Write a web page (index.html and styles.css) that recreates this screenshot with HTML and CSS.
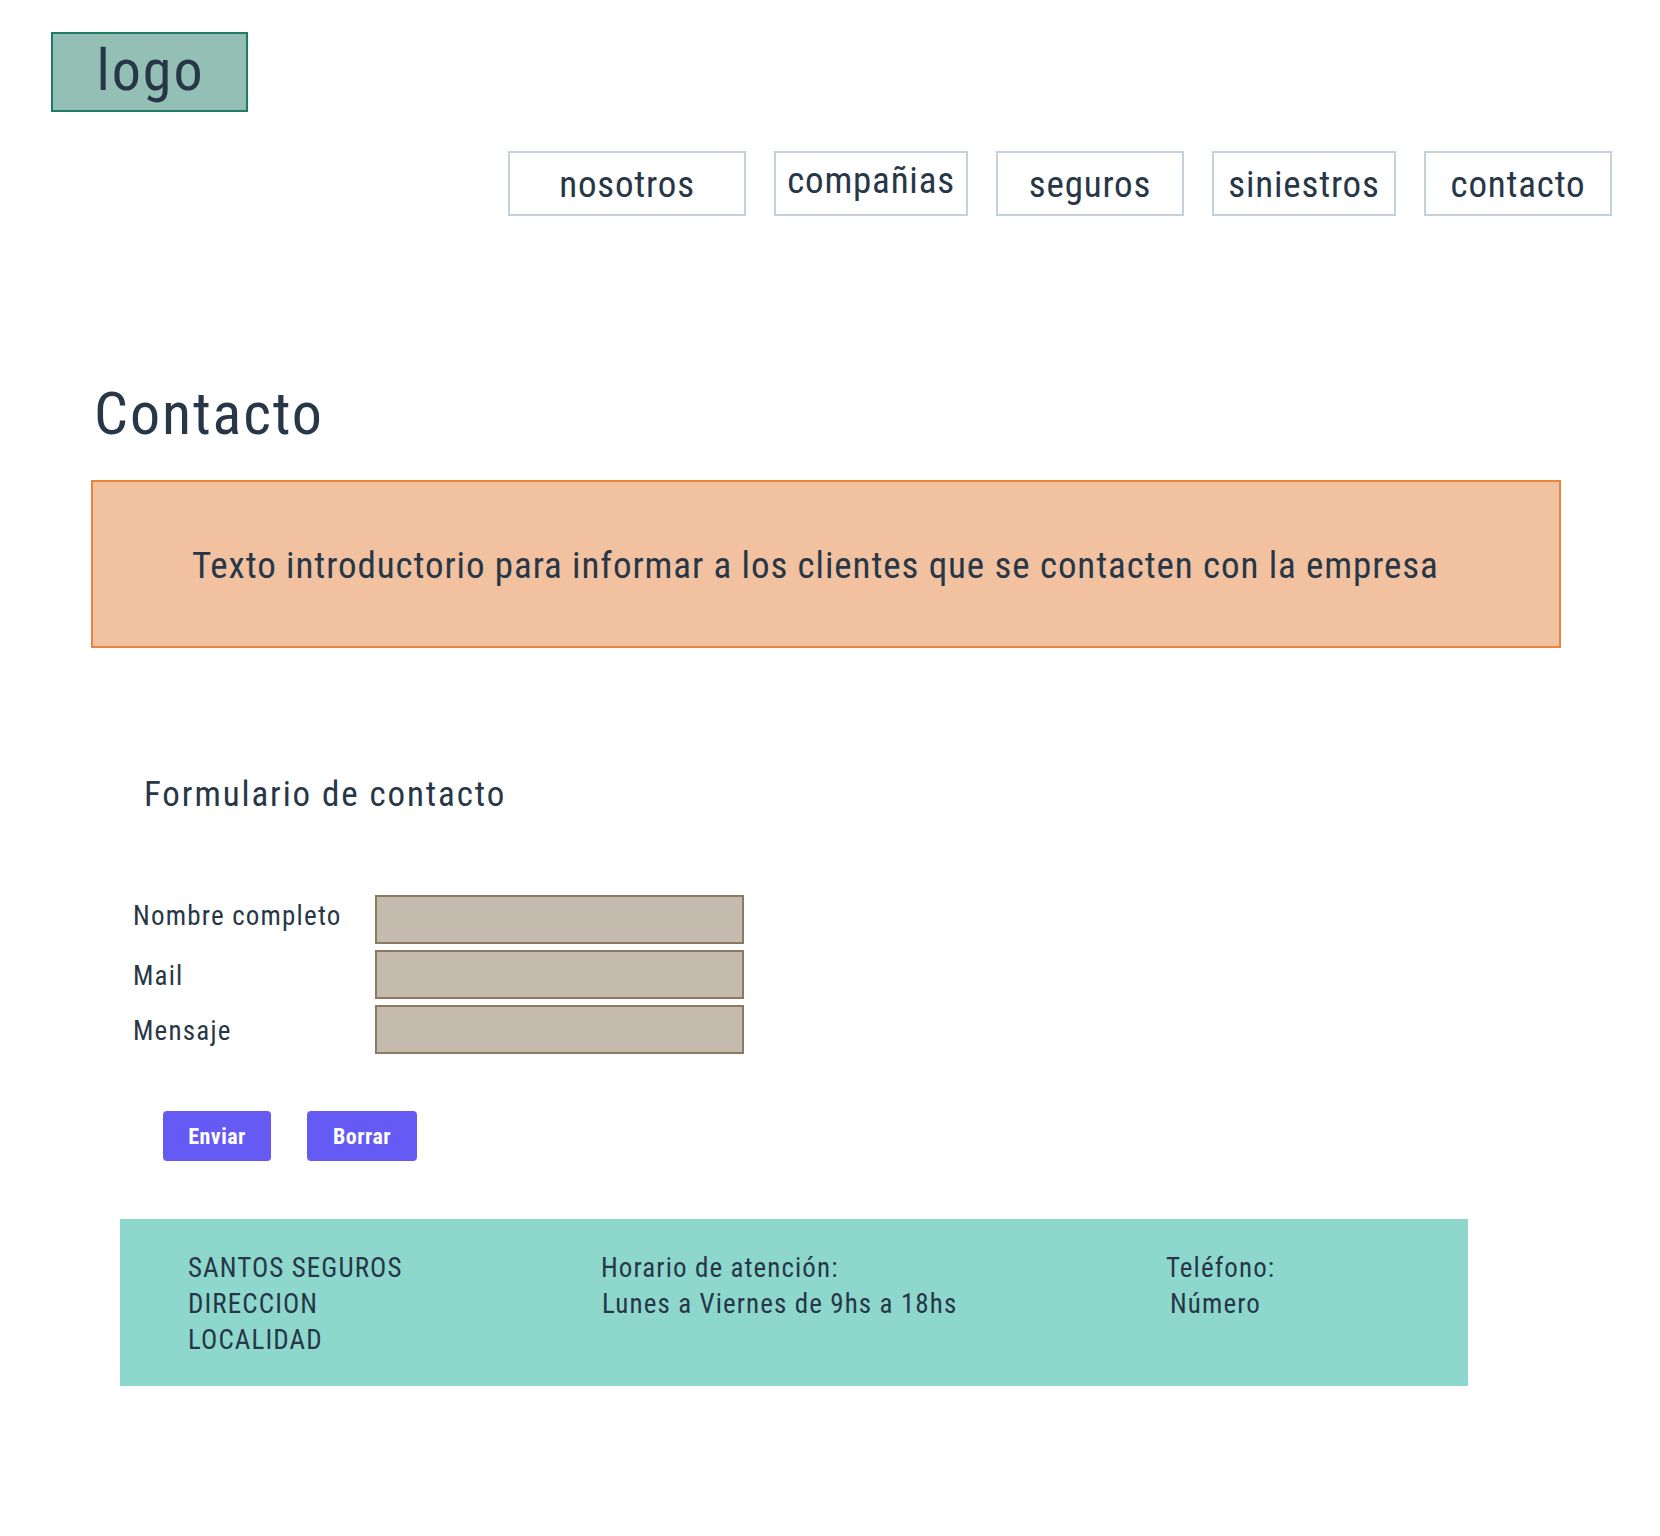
FILE: index.html
```
<!DOCTYPE html>
<html lang="es">
<head>
<meta charset="utf-8">
<title>Contacto</title>
<link rel="stylesheet" href="styles.css">
</head>
<body>
<header class="header">
  <div class="logo">logo</div>
  <nav class="nav">
    <a class="nav-item w-nosotros">nosotros</a>
    <a class="nav-item w-companias nav-item-up">compañias</a>
    <a class="nav-item w-seguros">seguros</a>
    <a class="nav-item w-siniestros">siniestros</a>
    <a class="nav-item w-contacto">contacto</a>
  </nav>
</header>
<main class="main">
  <h1 class="title">Contacto</h1>
  <div class="intro">
    <p class="intro-text">Texto introductorio para informar a los clientes que se contacten con la empresa</p>
  </div>
  <h2 class="form-title">Formulario de contacto</h2>
  <form class="form">
    <div class="field field-first">
      <label class="label">Nombre completo</label>
      <div class="input"></div>
    </div>
    <div class="field">
      <label class="label">Mail</label>
      <div class="input"></div>
    </div>
    <div class="field">
      <label class="label">Mensaje</label>
      <div class="input"></div>
    </div>
    <div class="buttons">
      <button type="button" class="btn btn-enviar">Enviar</button>
      <button type="button" class="btn btn-borrar">Borrar</button>
    </div>
  </form>
  <footer class="footer">
    <div class="fcol">
      <div>SANTOS SEGUROS</div>
      <div>DIRECCION</div>
      <div>LOCALIDAD</div>
    </div>
    <div class="fcol">
      <div>Horario de atención:</div>
      <div class="indent1">Lunes a Viernes de 9hs a 18hs</div>
    </div>
    <div class="fcol">
      <div>Teléfono:</div>
      <div class="indent4">Número</div>
    </div>
  </footer>
</main>
</body>
</html>
```
FILE: styles.css
```
html, body { margin: 0; padding: 0; background: #ffffff; }
body {
  font-family: Roboto, "Noto Sans", sans-serif;
  font-stretch: condensed;
  color: #273747;
}
.header { padding: 32px 48px 0 51px; }
.logo {
  box-sizing: border-box;
  width: 197px;
  height: 80px;
  background: #93bfb4;
  border: 2px solid #1f7a66;
  display: flex;
  align-items: center;
  justify-content: center;
  font-size: 58px;
  line-height: 1;
  letter-spacing: 2px;
  padding: 0 0 4px 2px;
}
.nav {
  display: flex;
  justify-content: flex-end;
  gap: 28px;
  margin-top: 39px;
}
.nav-item {
  box-sizing: border-box;
  height: 65px;
  border: 2px solid #c5d1db;
  display: flex;
  align-items: center;
  justify-content: center;
  font-size: 37px;
  line-height: 1;
  letter-spacing: 0.8px;
  padding-top: 2px;
}
.nav-item-up { padding-top: 0; padding-bottom: 6px; }
.w-nosotros { width: 238px; }
.w-companias { width: 194px; }
.w-seguros { width: 188px; }
.w-siniestros { width: 184px; }
.w-contacto { width: 188px; }

.main { padding: 0; }
.title {
  margin: 162px 0 0 94px;
  font-weight: 400;
  font-size: 60px;
  line-height: 72px;
  letter-spacing: 1.9px;
}
.intro {
  box-sizing: border-box;
  margin: 30px 0 0 91px;
  width: 1470px;
  height: 168px;
  background: #f2c19f;
  border: 2px solid #e8843b;
  display: flex;
  align-items: center;
  padding: 4px 0 0 99px;
}
.intro-text {
  margin: 0;
  font-size: 37px;
  line-height: 44px;
  letter-spacing: 0.9px;
  white-space: nowrap;
}
.form-title {
  margin: 127px 0 0 144px;
  font-weight: 400;
  font-size: 35px;
  line-height: 40px;
  letter-spacing: 1.9px;
}
.form {
  margin: 80px 0 0 133px;
  display: flex;
  flex-direction: column;
  gap: 6px;
}
.field {
  display: flex;
  align-items: center;
  height: 49px;
}
.label {
  width: 242px;
  font-size: 27px;
  line-height: 49px;
  letter-spacing: 1.2px;
  padding-top: 4px;
  box-sizing: border-box;
  white-space: nowrap;
}
.field-first .label { padding-top: 0; padding-bottom: 6px; }
.input {
  box-sizing: border-box;
  width: 369px;
  height: 49px;
  background: #c4bbae;
  border: 2px solid #8b7a5f;
}
.buttons {
  display: flex;
  gap: 36px;
  margin: 51px 0 0 30px;
}
.btn {
  box-sizing: border-box;
  height: 50px;
  border: none;
  border-radius: 4px;
  background: #665af4;
  color: #ffffff;
  font-family: Roboto, "Noto Sans", sans-serif;
  font-stretch: condensed;
  font-weight: 700;
  font-size: 22px;
  letter-spacing: 0.5px;
  padding: 0;
}
.btn-enviar { width: 108px; }
.btn-borrar { width: 110px; }
.footer {
  box-sizing: border-box;
  margin: 58px 0 0 120px;
  width: 1348px;
  height: 167px;
  background: #8dd7cd;
  padding: 31px 0 0 68px;
  display: grid;
  grid-template-columns: 413px 565px 1fr;
  font-size: 27px;
  line-height: 36px;
  letter-spacing: 1.1px;
}
.indent1 { padding-left: 1px; }
.indent4 { padding-left: 4px; }
```
